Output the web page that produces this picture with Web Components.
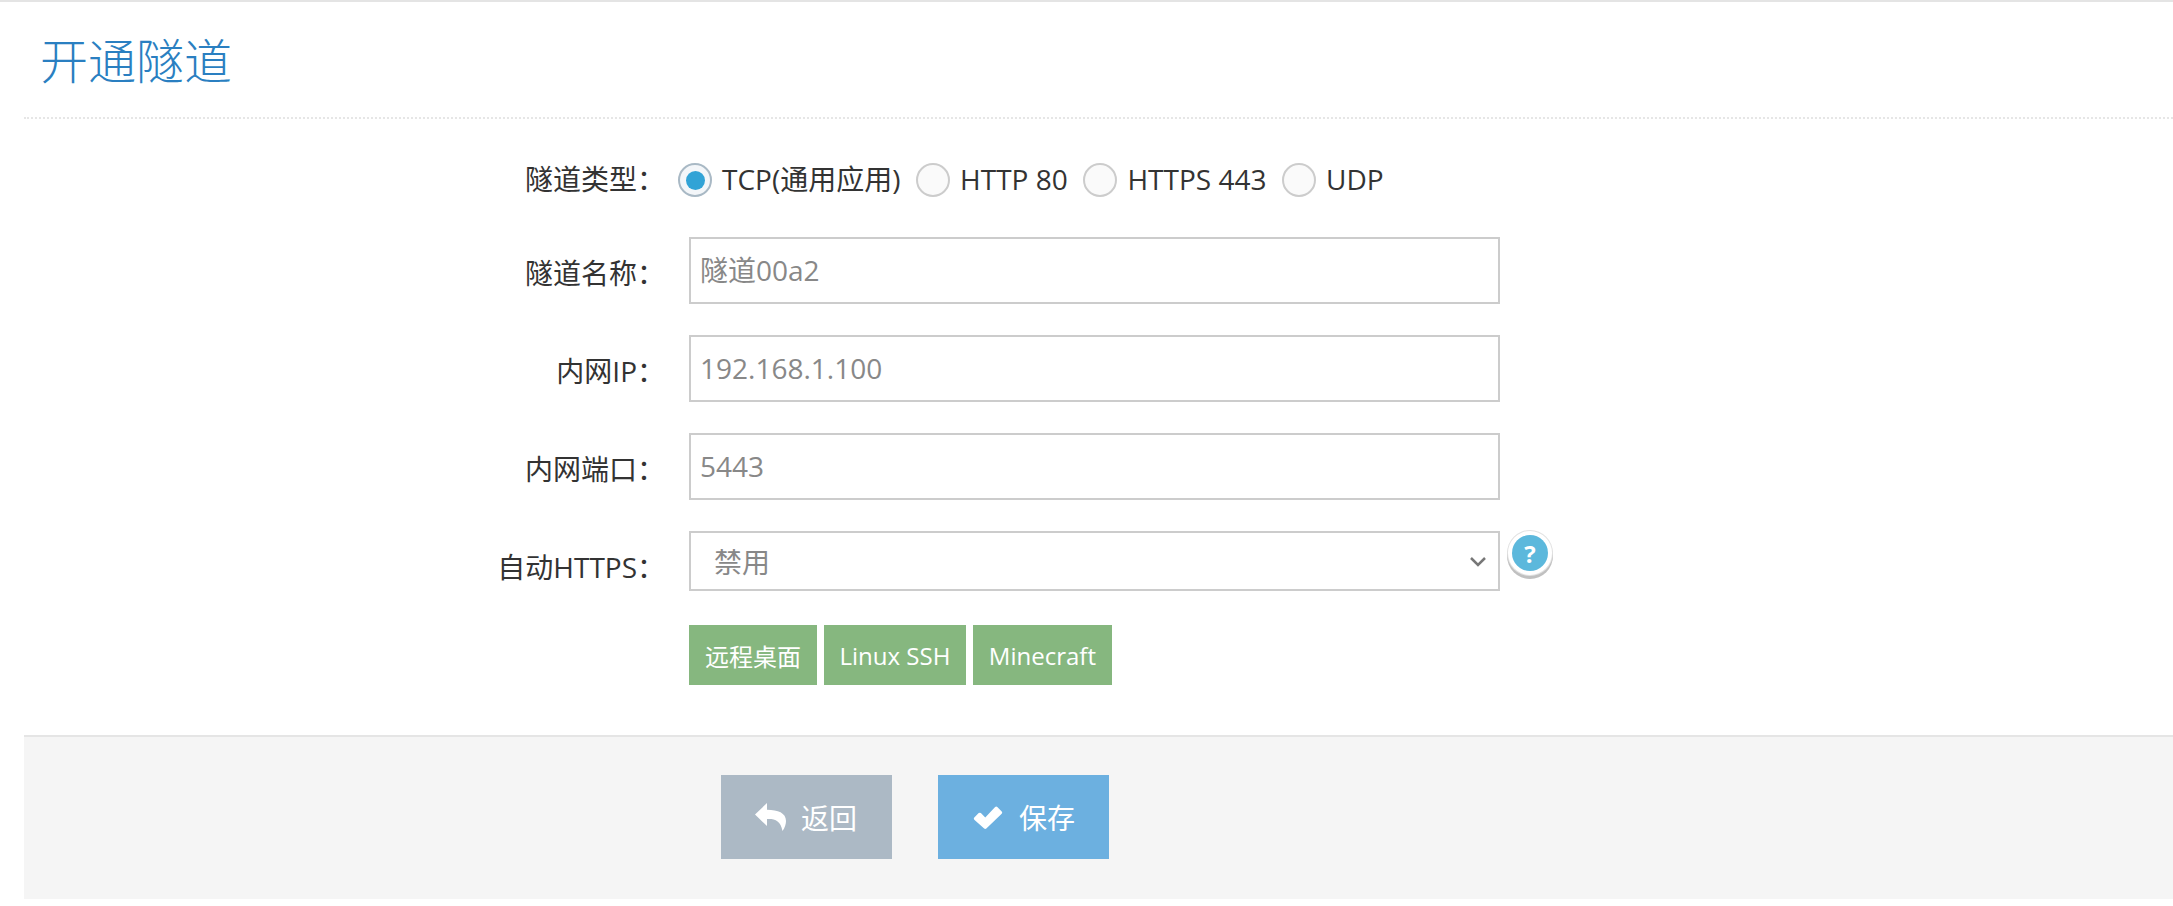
<!DOCTYPE html>
<html lang="zh">
<head>
<meta charset="utf-8">
<title>开通隧道</title>
<style>
html, body { margin: 0; height: 100%; background: #fff; }
body { font-family: "Open Sans", "Noto Sans CJK SC", sans-serif; color: #333; overflow: hidden; }
</style>
</head>
<body>
<tunnel-page>
	<span slot="title">开通隧道</span>

	<form-row label="隧道类型：" class="short">
		<radio-option checked>TCP(通用应用)</radio-option>
		<radio-option>HTTP 80</radio-option>
		<radio-option>HTTPS 443</radio-option>
		<radio-option>UDP</radio-option>
	</form-row>
	<form-row label="隧道名称："><text-field>隧道00a2</text-field></form-row>
	<form-row label="内网IP："><text-field>192.168.1.100</text-field></form-row>
	<form-row label="内网端口："><text-field>5443</text-field></form-row>
	<form-row label="自动HTTPS：" class="short"><select-field>禁用</select-field><help-badge></help-badge></form-row>
	<form-row>
		<preset-button>远程桌面</preset-button>
		<preset-button>Linux SSH</preset-button>
		<preset-button>Minecraft</preset-button>
	</form-row>

	<action-button slot="actions" color="#acb9c5">
		<svg slot="icon" width="31" height="28" viewBox="0 0 31 28"><path fill="#fff" d="M12 0 0 11.500 12 23v-7c8-.4 13.500 1.500 15.500 12 2.500-3.500 3.500-7 3.500-10C31 10 23 6.800 12 6.800z"/></svg>
		返回
	</action-button>
	<action-button slot="actions" color="#6cb0e0" class="check">
		<svg slot="icon" width="30" height="23" viewBox="0 0 27 21"><path fill="#fff" d="M1 10.500 5 6.500a1.500 1.500 0 0 1 2 0l4 4L20 1a1.500 1.500 0 0 1 2 0l4 4a1.500 1.500 0 0 1 0 2L12 20.500a1.500 1.500 0 0 1-2 0L1 12.500a1.500 1.500 0 0 1 0-2z"/></svg>
		保存
	</action-button>
</tunnel-page>

<script>
class TunnelPage extends HTMLElement {
	constructor() {
		super();
		this.attachShadow({ mode: 'open' });
		this.shadowRoot.innerHTML = `
		<style>
		:host { display: block; height: 899px; box-sizing: border-box; border-top: 2px solid #e4e4e4; padding-left: 24px; }
		.head { height: 117px; box-sizing: border-box; border-bottom: 2px dotted #e6e6e6; font-size: 48px; line-height: 1; color: #2a7fc1; padding: 35px 0 0 16px; font-weight: 300; }
		.form { height: 616px; box-sizing: border-box; padding-top: 24px; }
		.foot { height: 164px; box-sizing: border-box; border-top: 2px solid #e5e5e5; background: #f5f5f5; padding: 38px 0 0 697px; display: flex; gap: 46px; }
		</style>
		<div class="head"><slot name="title"></slot></div>
		<div class="form"><slot></slot></div>
		<div class="foot"><slot name="actions"></slot></div>
`;
	}
}

class FormRow extends HTMLElement {
	constructor() {
		super();
		this.attachShadow({ mode: 'open' });
		this.shadowRoot.innerHTML = `
		<style>
		:host { display: grid; grid-template-columns: 641px 1fr; height: 98px; font-size: 28px; }
		:host(.short) { height: 94px; }
		.label { text-align: right; line-height: 72px; height: 74px; color: #333; white-space: nowrap; }
		.body { padding-left: 24px; display: flex; align-items: flex-start; }
		</style>
		<div class="label"></div>
		<div class="body"><slot></slot></div>
`;
		this.shadowRoot.querySelector('.label').textContent = this.getAttribute('label') || '';
	}
}

class RadioOption extends HTMLElement {
	constructor() {
		super();
		this.attachShadow({ mode: 'open' });
		this.shadowRoot.innerHTML = `
		<style>
		:host { display: inline-flex; align-items: center; gap: 10px; margin: 20px 15.700px 0 -11px; white-space: nowrap; }
		:host(:not(:first-child)) { margin-left: 0; }
		.text { line-height: 32px; height: 34px; }
		.dot { width: 34px; height: 34px; box-sizing: border-box; border-radius: 50%; border: 2px solid #ccc; background: #fafafa; display: flex; align-items: center; justify-content: center; }
		:host([checked]) .dot { border-color: #a9b9c5; background: #f3f6f9; }
		:host([checked]) .dot::after { content: ""; width: 19px; height: 19px; border-radius: 50%; background: #32a3d6; }
		</style>
		<span class="dot"></span><span class="text"><slot></slot></span>
`;
	}
}

class TextField extends HTMLElement {
	constructor() {
		super();
		this.attachShadow({ mode: 'open' });
		this.shadowRoot.innerHTML = `
		<style>
		:host { display: block; width: 811px; height: 67px; box-sizing: border-box; border: 2px solid #ccc; background: #fff; color: #888; line-height: 63px; padding-left: 9px; }
		</style>
		<slot></slot>
`;
	}
}

class SelectField extends HTMLElement {
	constructor() {
		super();
		this.attachShadow({ mode: 'open' });
		this.shadowRoot.innerHTML = `
		<style>
		:host { display: flex; align-items: center; justify-content: space-between; width: 811px; height: 60px; box-sizing: border-box; border: 2px solid #ccc; background: #fff; color: #888; padding: 0 11px 0 23px; }
		svg { display: block; margin-top: 2px; }
		</style>
		<span><slot></slot></span>
		<svg width="18" height="12" viewBox="0 0 18 12"><path d="M2 2l7 7 7-7" fill="none" stroke="#777" stroke-width="2.500"/></svg>
`;
	}
}

class HelpBadge extends HTMLElement {
	constructor() {
		super();
		this.attachShadow({ mode: 'open' });
		this.shadowRoot.innerHTML = `
		<style>
		:host { display: flex; align-items: center; justify-content: center; width: 36px; height: 36px; box-sizing: border-box; padding-top: 2px; margin: 4px 0 0 12px; border-radius: 50%; background: #5cb8dc; box-shadow: 0 0 0 4px #fff, 0 0 0 5px #e2e2e2, 0 3px 0 5px #c0c0c0; color: #fff; font-size: 24px; font-weight: 700; line-height: 1; }
		</style>
		?
`;
	}
}

class PresetButton extends HTMLElement {
	constructor() {
		super();
		this.attachShadow({ mode: 'open' });
		this.shadowRoot.innerHTML = `
		<style>
		:host { display: flex; align-items: center; height: 60px; padding: 0 16px; margin-right: 6.500px; background: #86b77f; color: #fff; font-size: 24px; white-space: nowrap; }
		</style>
		<slot></slot>
`;
	}
}

class ActionButton extends HTMLElement {
	constructor() {
		super();
		this.attachShadow({ mode: 'open' });
		this.shadowRoot.innerHTML = `
		<style>
		:host { display: flex; align-items: center; gap: 15px; width: 171px; height: 84px; box-sizing: border-box; padding-left: 34px; color: #fff; font-size: 28px; }
		:host(.check) { padding-left: 35px; gap: 16px; }
		::slotted(svg) { display: block; }
		</style>
		<slot name="icon"></slot><slot></slot>
`;
		this.style.background = this.getAttribute('color');
	}
}

customElements.define('tunnel-page', TunnelPage);
customElements.define('form-row', FormRow);
customElements.define('radio-option', RadioOption);
customElements.define('text-field', TextField);
customElements.define('select-field', SelectField);
customElements.define('help-badge', HelpBadge);
customElements.define('preset-button', PresetButton);
customElements.define('action-button', ActionButton);
</script>
</body>
</html>
